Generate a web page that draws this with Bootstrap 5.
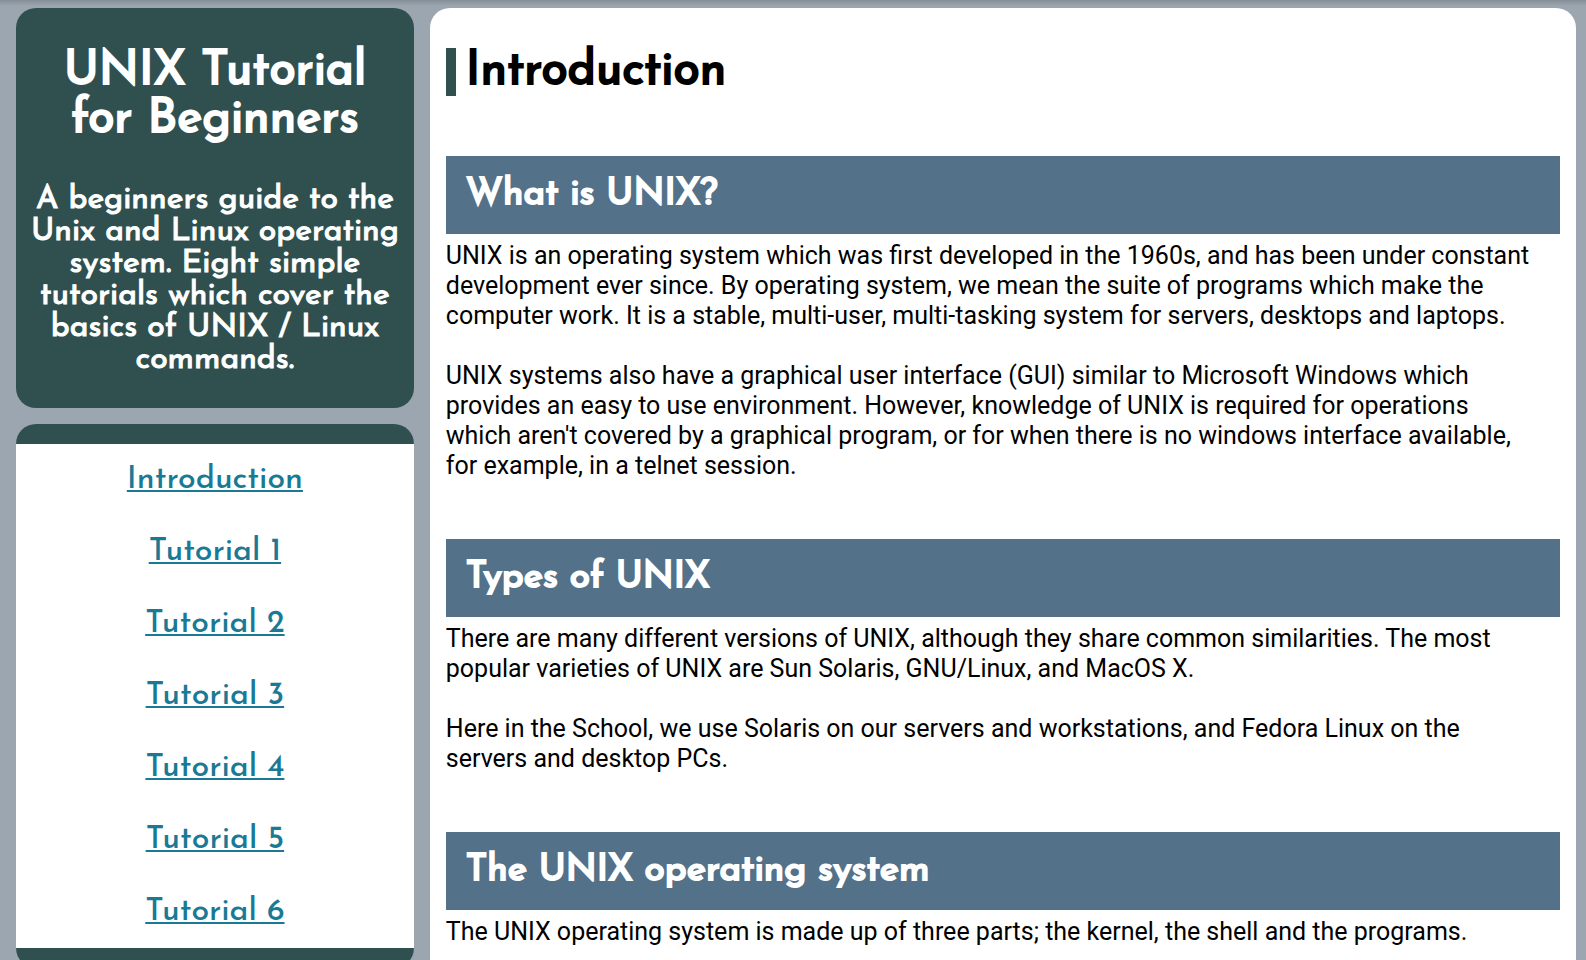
<!DOCTYPE html>
<html lang="en">
<head>
<meta charset="utf-8">
<meta name="viewport" content="width=device-width, initial-scale=1">
<title>UNIX Tutorial for Beginners</title>
<link href="https://cdn.jsdelivr.net/npm/bootstrap@5.3.0/dist/css/bootstrap.min.css" rel="stylesheet">
<style>
  :root { --pine: #30504f; --slate: #537188; --display: "Josefin Sans", Lato, sans-serif; }
  body { background: #9ca6b0; color: #000; font-family: Roboto, sans-serif; }
  .page { padding: 8px 10px 8px 16px; background: linear-gradient(rgba(0, 0, 0, .15), transparent 6px); }
  .side { flex: 0 0 25.5%; }
  .panel { border-radius: 20px; overflow: hidden; }
  .intro { background: var(--pine); color: #fff; font-family: var(--display); padding: 40px 8px 32px; }
  .intro h1 { font-size: 48px; line-height: 48px; font-weight: 400; -webkit-text-stroke: 2px; margin-bottom: 40px; }
  .intro p { font-size: 32px; line-height: 32px; font-weight: 400; -webkit-text-stroke: 1px; }
  .menu { border-top: 20px solid var(--pine); border-bottom: 20px solid var(--pine); font-family: var(--display); font-size: 32px; line-height: 72px; }
  .menu a { color: #1a7a96; text-decoration-thickness: 2px; text-underline-offset: 2px; font-weight: 500; }
  .article { padding: 40px 16px 16px; border-radius: 20px; }
  .article h1 { border-left: 10px solid var(--pine); padding-left: 10px; font-size: 48px; line-height: 48px; font-weight: 400; -webkit-text-stroke: 2px; font-family: var(--display); margin-bottom: 60px; }
  .article h2 { background: var(--slate); color: #fff; font-family: var(--display); font-size: 37px; line-height: 40px; font-weight: 400; -webkit-text-stroke: 2px; padding: 19px 20px; margin-bottom: 7px; }
  .article section { font-size: 25px; line-height: 30px; margin-bottom: 58px; }
  .article p { margin-bottom: 30px; }
  .article p:last-child { margin-bottom: 0; }
</style>
</head>
<body>
<div class="page d-flex align-items-stretch gap-3">
  <aside class="side d-flex flex-column gap-3">
    <header class="panel intro text-center flex-shrink-0">
      <h1>UNIX Tutorial<br>for Beginners</h1>
      <p class="mb-0">A beginners guide to the<br>Unix and Linux operating<br>system. Eight simple<br>tutorials which cover the<br>basics of UNIX / Linux<br>commands.</p>
    </header>
    <nav class="panel menu bg-white text-center flex-shrink-0" aria-label="Tutorials">
      <ul class="list-unstyled mb-0">
        <li><a href="#intro">Introduction</a></li>
        <li><a href="#t1">Tutorial 1</a></li>
        <li><a href="#t2">Tutorial 2</a></li>
        <li><a href="#t3">Tutorial 3</a></li>
        <li><a href="#t4">Tutorial 4</a></li>
        <li><a href="#t5">Tutorial 5</a></li>
        <li><a href="#t6">Tutorial 6</a></li>
      </ul>
    </nav>
  </aside>
  <main class="article bg-white flex-fill" id="intro">
    <h1>Introduction</h1>
    <section>
      <h2>What is UNIX?</h2>
      <p>UNIX is an operating system which was first developed in the 1960s, and has been under constant<br>development ever since. By operating system, we mean the suite of programs which make the<br>computer work. It is a stable, multi-user, multi-tasking system for servers, desktops and laptops.</p>
      <p>UNIX systems also have a graphical user interface (GUI) similar to Microsoft Windows which<br>provides an easy to use environment. However, knowledge of UNIX is required for operations<br>which aren't covered by a graphical program, or for when there is no windows interface available,<br>for example, in a telnet session.</p>
    </section>
    <section>
      <h2>Types of UNIX</h2>
      <p>There are many different versions of UNIX, although they share common similarities. The most<br>popular varieties of UNIX are Sun Solaris, GNU/Linux, and MacOS X.</p>
      <p>Here in the School, we use Solaris on our servers and workstations, and Fedora Linux on the<br>servers and desktop PCs.</p>
    </section>
    <section>
      <h2>The UNIX operating system</h2>
      <p>The UNIX operating system is made up of three parts; the kernel, the shell and the programs.</p>
    </section>
  </main>
</div>
<script src="https://cdn.jsdelivr.net/npm/bootstrap@5.3.0/dist/js/bootstrap.bundle.min.js"></script>
</body>
</html>
